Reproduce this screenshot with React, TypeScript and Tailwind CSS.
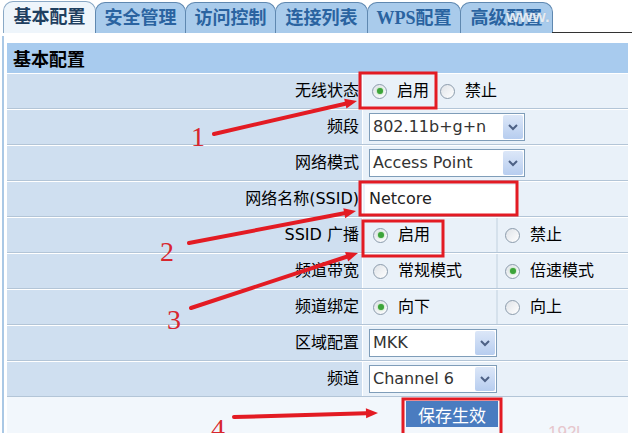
import React from "react";

const TABS = [
    { label: "基本配置", w: "w-[93px]", active: true },
    { label: "安全管理", w: "w-[91px]" },
    { label: "访问控制", w: "w-[91px]" },
    { label: "连接列表", w: "w-[93px]" },
    { label: "WPS配置", w: "w-[94px]" },
    { label: "高级配置", w: "w-[93px]" },
];

function Radio({ checked }: { checked?: boolean }) {
    return (
        <span className="inline-flex items-center justify-center w-[15px] h-[15px] rounded-full border border-[#8c9cac] bg-gradient-to-br from-[#dfe3e8] to-white">
            {checked && <span className="w-[6px] h-[6px] rounded-full bg-[#3da43a] shadow-[0_0_2px_#7ccf6e]" />}
        </span>
    );
}

function RadioItem({ checked, text }: { checked?: boolean; text: string }) {
    return (
        <span className="inline-flex items-center">
            <Radio checked={checked} />
            <span className="ml-[10px]">{text}</span>
        </span>
    );
}

function Select({ value, w }: { value: string; w: string }) {
    return (
        <div className={`${w} h-[28px] flex items-center border border-[#7f9db9] bg-white`}>
            <span className="flex-1 pl-[3px] text-[16px] text-[#333] font-['DejaVu_Sans',sans-serif] leading-none">{value}</span>
            <span className="w-[20px] h-[24px] mr-[1px] flex items-center justify-center bg-gradient-to-b from-[#dce7f8] to-[#b7cdef] rounded-[2px]">
                <svg width="10" height="8" viewBox="0 0 10 8">
                    <path d="M1 2 L5 6 L9 2" fill="none" stroke="#4d6185" strokeWidth="2" />
                </svg>
            </span>
        </div>
    );
}

function Row({ label, children, split }: { label: string; children?: React.ReactNode; split?: React.ReactNode }) {
    return (
        <div className="flex h-[36px] border-t border-white border-b border-b-[#b3c5d7]">
            <div className="w-[355px] bg-[#cfdff0] flex items-center justify-end pr-[3px]">{label}</div>
            {split ? (
                <>
                    <div className="w-[134px] bg-[#e9f1f9] border-l border-white flex items-center pl-[10px]">{children}</div>
                    <div className="flex-1 bg-[#e9f1f9] border-l-2 border-[#d5e1ec] flex items-center pl-[7px]">{split}</div>
                </>
            ) : (
                <div className="flex-1 bg-[#e9f1f9] border-l border-white flex items-center pl-[6px]">{children}</div>
            )}
        </div>
    );
}

function Arrow({ x1, y1, x2, y2 }: { x1: number; y1: number; x2: number; y2: number }) {
    const a = Math.atan2(y2 - y1, x2 - x1);
    const len = 12;
    const half = 5;
    const bx = x2 - Math.cos(a) * len;
    const by = y2 - Math.sin(a) * len;
    const px = -Math.sin(a) * half;
    const py = Math.cos(a) * half;
    return (
        <g>
            <line x1={x1} y1={y1} x2={bx} y2={by} stroke="#e31b23" strokeWidth="4" strokeLinecap="round" />
            <polygon points={`${x2},${y2} ${bx + px},${by + py} ${bx - px},${by - py}`} fill="#e31b23" />
        </g>
    );
}

export default function App() {
    return (
        <div className="relative w-[632px] h-[433px] overflow-hidden bg-white text-[16px] text-black font-['DejaVu_Sans','Noto_Sans_CJK_SC',sans-serif]">
            {/* tabs */}
            <div className="flex items-end h-[33px] pl-[3px]">
                {TABS.map(t => (
                    <div
                        key={t.label}
                        className={`${t.w} h-[31px] -mr-[1px] flex items-center justify-center rounded-t-[10px] border border-b-0 text-[18px] font-bold font-['Liberation_Serif','Noto_Sans_CJK_SC',serif] ${
                            t.active
                                ? "bg-[#eef5fb] border-[#8aa9c6] text-[#1f3f60] h-[32px]"
                                : "bg-[#a9cbeb] border-[#5f88b0] text-[#2a63a0]"
                        }`}
                    >
                        {t.label}
                    </div>
                ))}
                <div className="flex-1 border-b border-[#333]" />
            </div>
            <span className="absolute left-[506px] top-[4px] text-[17px] font-bold text-white/80 font-['Liberation_Sans',sans-serif] [text-shadow:0_0_1px_#7a9cc0]">www.</span>

            {/* panel */}
            <div className="ml-[2px] mr-[4px] mt-[3px] border-l-2 border-[#aac8e5] pl-[3px] pt-[7px] bg-white">
                <div className="h-[30px] bg-[#a8cbee] flex items-center pl-[6px] text-[18px] font-bold font-['Noto_Sans_CJK_SC',sans-serif]">
                    基本配置
                </div>

                <Row label="无线状态">
                    <span className="inline-flex items-center pl-[3px] gap-[11px]">
                        <RadioItem checked text="启用" />
                        <RadioItem text="禁止" />
                    </span>
                </Row>
                <Row label="频段">
                    <Select value="802.11b+g+n" w="w-[156px]" />
                </Row>
                <Row label="网络模式">
                    <Select value="Access Point" w="w-[156px]" />
                </Row>
                <Row label="网络名称(SSID)">
                    <div className="-ml-[4px] w-[152px] h-[29px] bg-white flex items-center pl-[4px] text-[16px] text-[#222]">Netcore</div>
                </Row>
                <Row label="SSID 广播" split={<RadioItem text="禁止" />}>
                    <RadioItem checked text="启用" />
                </Row>
                <Row label="频道带宽" split={<RadioItem checked text="倍速模式" />}>
                    <RadioItem text="常规模式" />
                </Row>
                <Row label="频道绑定" split={<RadioItem text="向上" />}>
                    <RadioItem checked text="向下" />
                </Row>
                <Row label="区域配置">
                    <Select value="MKK" w="w-[128px]" />
                </Row>
                <Row label="频道">
                    <Select value="Channel 6" w="w-[128px]" />
                </Row>

                <div className="h-[40px] bg-[#f2f7fc] flex items-start pl-[399px] pt-[4px]">
                    <button className="w-[92px] h-[26px] bg-[#4a7cc0] text-white text-[17px] leading-none font-['Noto_Sans_CJK_SC',sans-serif]">
                        保存生效
                    </button>
                </div>
            </div>
            <span className="absolute left-[548px] top-[420px] text-[17px] text-[#e7c6cc] font-['Liberation_Sans',sans-serif]">192l</span>

            {/* annotations */}
            <svg className="absolute inset-0 pointer-events-none" width="632" height="433" viewBox="0 0 632 433">
                <rect x="360" y="73" width="76" height="35" fill="none" stroke="#e31b23" strokeWidth="3" />
                <rect x="360" y="182" width="157" height="33" fill="none" stroke="#e31b23" strokeWidth="3" />
                <rect x="363" y="221" width="80" height="35" fill="none" stroke="#e31b23" strokeWidth="3" />
                <rect x="403" y="399" width="98" height="37" fill="none" stroke="#e31b23" strokeWidth="3" />

                <Arrow x1={214} y1={134} x2={357} y2={101} />
                <Arrow x1={189} y1={243} x2={356} y2={211} />
                <Arrow x1={191} y1={308} x2={358} y2={253} />
                <Arrow x1={234} y1={417} x2={378} y2={413} />

                <g fill="#d8262e" fontFamily="Liberation Serif, serif" fontSize="28">
                    <text x="191" y="146">1</text>
                    <text x="160" y="261">2</text>
                    <text x="167" y="329">3</text>
                    <text x="211" y="438">4</text>
                </g>
            </svg>
        </div>
    );
}
